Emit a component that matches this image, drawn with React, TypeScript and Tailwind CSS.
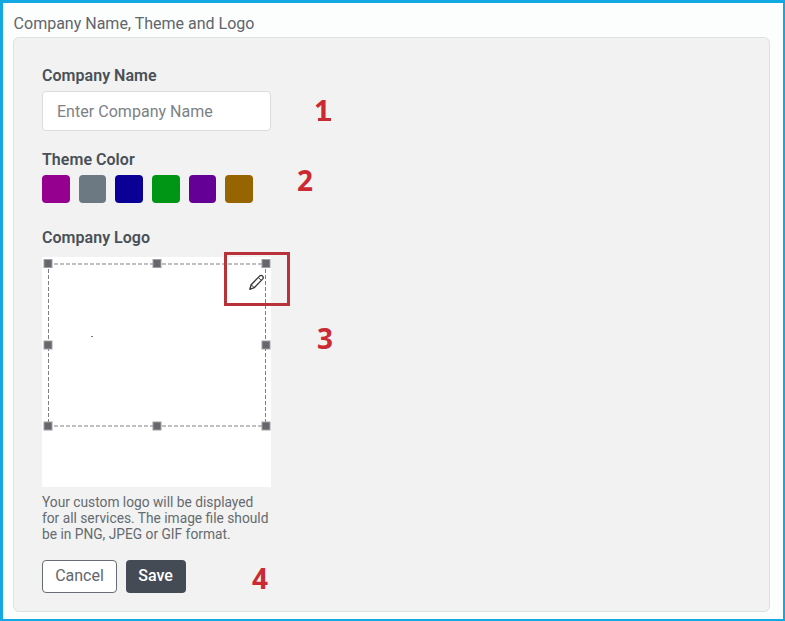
import type { ReactNode } from "react";

const themeColors = ["#96008f", "#6c7882", "#0b0096", "#009615", "#640096", "#966400"];

const handles = [
  [6, 6.5], [115, 6.5], [224, 6.5],
  [6, 88], [224, 88],
  [6, 169], [115, 169], [224, 169],
];

function Label({ children }: { children: ReactNode }) {
  return <div className="text-[16px] leading-5 font-semibold tracking-[0.03px] text-[#495057]">{children}</div>;
}

function Marker({ children, className }: { children: ReactNode; className: string }) {
  return (
    <span className={`absolute font-['Noto_Sans',sans-serif] text-[28px] leading-7 font-bold text-[#cb2a32] ${className}`}>
      {children}
    </span>
  );
}

function NumberOne() {
  return (
    <Marker className="top-[93px] left-[311px]">
      1<span className="absolute bottom-[3px] left-[4px] h-[3px] w-[13px] bg-[#cb2a32]" />
    </Marker>
  );
}

function LogoEditor() {
  return (
    <div className="relative mt-[9px] h-[230px] w-[229px] bg-white">
      <svg className="block" width="229" height="230" viewBox="0 0 229 230" fill="none">
        <path d="M6 7H224M6 169H224" stroke="#808084" strokeDasharray="4 2" />
        <path d="M6.5 6V169M223.5 6V169" stroke="#808084" strokeDasharray="4 2" />
        {handles.map(([x, y]) => (
          <rect key={`${x}-${y}`} x={x - 4} y={y - 4} width="8" height="8" fill="#66676c" stroke="#a0a0a4" />
        ))}
        <rect x="49" y="79" width="2" height="1" fill="#77797b" />
        <g stroke="#36383a" strokeWidth="1.35" strokeLinejoin="round" strokeLinecap="round">
          <path d="M207.8 32.3L209.2 27.7L217.6 19.1Q219.1 17.7 220.6 19.1Q222 20.6 220.6 22.1L212.2 30.7Z" />
          <path d="M209.3 27.8L212.1 30.6M216.4 20.5L219.1 23.3" strokeWidth="1" />
        </g>
      </svg>
      <div className="absolute top-[-5px] left-[182px] h-[54px] w-[66px] border-[3px] border-[#b9323a]" />
    </div>
  );
}

export default function App() {
  return (
    <main className="relative h-[621px] w-[785px] border-t-[3px] border-r-2 border-b-2 border-l-[3px] border-[#12a9e2] bg-[#fcfdfd] pr-[13px] pl-[10px] font-[Roboto,sans-serif]">
      <h1 className="pt-[11px] pl-[0.6px] text-[16px] leading-5 font-normal text-[#5f666c]">Company Name, Theme and Logo</h1>
      <section className="mt-[3px] flex h-[575px] flex-col items-start rounded-md border-[1.5px] border-[#dee0e3] bg-[#f2f2f2] pt-[28px] pl-[28px]">
        <Label>Company Name</Label>
        <input
          className="mt-[5px] h-10 w-[229px] rounded border border-[#dadcdf] bg-white px-[14px] text-[16px] tracking-[0.03px] placeholder:text-[#7b8186]"
          placeholder="Enter Company Name"
        />
        <div className="mt-[19px]"><Label>Theme Color</Label></div>
        <div className="mt-[5px] flex gap-[9px]">
          {themeColors.map((color) => (
            <span key={color} className="h-[28px] w-[27.7px] rounded-[4px]" style={{ backgroundColor: color }} />
          ))}
        </div>
        <div className="mt-[25px]"><Label>Company Logo</Label></div>
        <LogoEditor />
        <p className="mt-[7px] text-[13.75px] leading-4 whitespace-nowrap text-[#656b70]">
          Your custom logo will be displayed<br />for all services. The image file should<br />be in PNG, JPEG or GIF format.
        </p>
        <div className="mt-[18px] flex gap-[9px]">
          <button className="h-[33px] w-[75px] rounded border border-[#686c73] bg-white pb-[2px] text-[16px] text-[#60666c]">Cancel</button>
          <button className="h-[33px] w-[60px] rounded bg-[#454b55] pr-[1px] pb-[2px] text-[16px] font-medium text-white">Save</button>
        </div>
      </section>
      <NumberOne />
      <Marker className="top-[163px] left-[294px]">2</Marker>
      <Marker className="top-[321px] left-[314px]">3</Marker>
      <Marker className="top-[561px] left-[249px]">4</Marker>
    </main>
  );
}
